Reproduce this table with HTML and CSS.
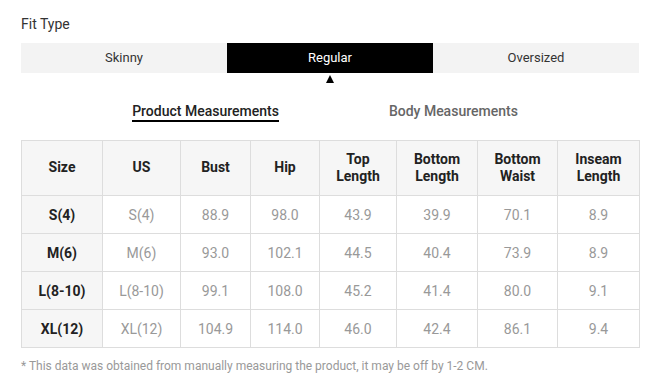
FILE: index.html
```html
<!DOCTYPE html>
<html lang="en">
<head>
    <meta charset="UTF-8">
    <meta name="viewport" content="width=device-width, initial-scale=1.0">
    <title>Size Guide</title>
    <link rel="stylesheet" href="styles.css">
</head>
<body>
    <div class="fit-title">Fit Type</div>
    <div class="fit-options">
        <div class="fit-option">Skinny</div>
        <div class="fit-option active">Regular</div>
        <div class="fit-option">Oversized</div>
    </div>

    <div class="tabs">
        <div class="tab active">Product Measurements</div>
        <div class="tab">Body Measurements</div>
    </div>

    <table class="size-table">
        <colgroup>
            <col style="width:81px">
            <col style="width:78px">
            <col style="width:70px">
            <col style="width:69px">
            <col style="width:77px">
            <col style="width:81px">
            <col style="width:80px">
            <col style="width:82px">
        </colgroup>
        <thead>
            <tr>
                <th>Size</th>
                <th>US</th>
                <th>Bust</th>
                <th>Hip</th>
                <th>Top<br>Length</th>
                <th>Bottom<br>Length</th>
                <th>Bottom<br>Waist</th>
                <th>Inseam<br>Length</th>
            </tr>
        </thead>
        <tbody>
            <tr><th>S(4)</th><td>S(4)</td><td>88.9</td><td>98.0</td><td>43.9</td><td>39.9</td><td>70.1</td><td>8.9</td></tr>
            <tr><th>M(6)</th><td>M(6)</td><td>93.0</td><td>102.1</td><td>44.5</td><td>40.4</td><td>73.9</td><td>8.9</td></tr>
            <tr><th>L(8-10)</th><td>L(8-10)</td><td>99.1</td><td>108.0</td><td>45.2</td><td>41.4</td><td>80.0</td><td>9.1</td></tr>
            <tr><th>XL(12)</th><td>XL(12)</td><td>104.9</td><td>114.0</td><td>46.0</td><td>42.4</td><td>86.1</td><td>9.4</td></tr>
        </tbody>
    </table>

    <p class="note">* This data was obtained from manually measuring the product, it may be off by 1-2 CM.</p>
</body>
</html>
```

FILE: styles.css
```css
body {
    font-family: Roboto, "Liberation Sans", sans-serif;
    color: #222;
    margin: 0;
    padding: 14px 30px 0 21px;
    background: #fff;
}
.fit-title {
    font-size: 14px;
    line-height: 20px;
    color: #333;
}
.fit-options {
    display: flex;
    margin-top: 9px;
    background: #f3f3f3;
}
.fit-option {
    flex: 1;
    height: 30px;
    line-height: 30px;
    text-align: center;
    font-size: 13px;
    color: #333;
    position: relative;
}
.fit-option.active {
    background: #000;
    color: #fff;
}
.fit-option.active::after {
    content: "";
    position: absolute;
    left: 50%;
    top: 32px;
    margin-left: -4px;
    border-left: 4px solid transparent;
    border-right: 4px solid transparent;
    border-bottom: 8px solid #000;
}
.tabs {
    display: flex;
    justify-content: center;
    gap: 110px;
    padding-right: 10px;
    margin-top: 29px;
}
.tab {
    font-size: 14px;
    font-weight: 500;
    line-height: 18px;
    color: #666;
    border-bottom: 2px solid transparent;
}
.tab.active {
    color: #222;
    border-bottom-color: #000;
}
.size-table {
    margin-top: 18px;
    width: 618px;
    border-collapse: collapse;
    table-layout: fixed;
    font-size: 14px;
}
.size-table th,
.size-table td {
    border: 1px solid #ddd;
    text-align: center;
    padding: 0;
}
.size-table thead th {
    height: 53px;
    padding-bottom: 1px;
    line-height: 17px;
    background: #f6f6f6;
    font-weight: 700;
    color: #222;
}
.size-table tbody th {
    height: 37px;
    background: #f6f6f6;
    font-weight: 700;
    color: #222;
}
.size-table td {
    color: #999;
}
.note {
    margin: 10px 0 0;
    font-size: 12px;
    line-height: 16px;
    color: #999;
}
```
